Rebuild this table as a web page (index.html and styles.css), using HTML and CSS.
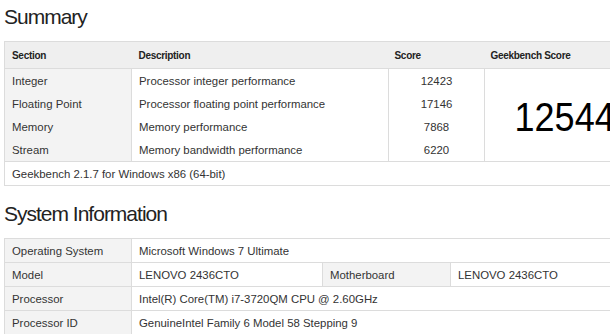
FILE: index.html
```html
<!DOCTYPE html>
<html lang="en">
<head>
  <meta charset="UTF-8" />
  <title>Geekbench Result</title>
  <link rel="stylesheet" href="styles.css">
</head>
<body>
  <div class="page">
    <h2 class="title">Summary</h2>
    <table class="summary">
      <colgroup>
        <col class="col-section">
        <col class="col-desc">
        <col class="col-score">
        <col class="col-total">
      </colgroup>
      <thead>
        <tr>
          <th>Section</th>
          <th>Description</th>
          <th>Score</th>
          <th>Geekbench Score</th>
        </tr>
      </thead>
      <tbody>
        <tr>
          <td class="label">Integer</td>
          <td class="desc">Processor integer performance</td>
          <td class="score">12423</td>
          <td class="total" rowspan="4"><span class="total-num">12544</span></td>
        </tr>
        <tr>
          <td class="label">Floating Point</td>
          <td class="desc">Processor floating point performance</td>
          <td class="score">17146</td>
        </tr>
        <tr>
          <td class="label">Memory</td>
          <td class="desc">Memory performance</td>
          <td class="score">7868</td>
        </tr>
        <tr>
          <td class="label">Stream</td>
          <td class="desc">Memory bandwidth performance</td>
          <td class="score">6220</td>
        </tr>
        <tr>
          <td class="footer" colspan="4">Geekbench 2.1.7 for Windows x86 (64-bit)</td>
        </tr>
      </tbody>
    </table>

    <h2 class="title sysinfo-title">System Information</h2>
    <table class="sysinfo">
      <colgroup>
        <col class="col-key">
        <col class="col-val">
        <col class="col-key2">
        <col class="col-val2">
      </colgroup>
      <tr>
        <td class="label">Operating System</td>
        <td colspan="3">Microsoft Windows 7 Ultimate</td>
      </tr>
      <tr>
        <td class="label">Model</td>
        <td>LENOVO 2436CTO</td>
        <td class="label">Motherboard</td>
        <td>LENOVO 2436CTO</td>
      </tr>
      <tr>
        <td class="label">Processor</td>
        <td colspan="3">Intel(R) Core(TM) i7-3720QM CPU @ 2.60GHz</td>
      </tr>
      <tr>
        <td class="label">Processor ID</td>
        <td colspan="3">GenuineIntel Family 6 Model 58 Stepping 9</td>
      </tr>
    </table>
  </div>
</body>
</html>
```

FILE: styles.css
```css
body {
  margin: 0;
  background: #fff;
  color: #333;
  font-family: "Liberation Sans", Arial, sans-serif;
  overflow: hidden;
}

.page {
  width: 637px;
  padding: 0 4px;
}

.title {
  margin: 4px 0 12px;
  font-size: 21px;
  line-height: 25px;
  letter-spacing: -1px;
  font-weight: normal;
  color: #222;
}

.sysinfo-title {
  margin-top: 15px;
}

table {
  width: 100%;
  border-collapse: collapse;
  table-layout: fixed;
  border: 1px solid #dcdcdc;
  font-size: 11.4px;
}

td, th {
  padding: 0 7px;
  text-align: left;
  white-space: nowrap;
}

/* summary */
.col-section { width: 127px; }
.col-desc { width: 257px; }
.col-score { width: 96px; }

.summary th {
  height: 26px;
  background: #efefef;
  border-bottom: 1px solid #dcdcdc;
  font-size: 10px;
  letter-spacing: -0.3px;
  font-weight: bold;
  color: #222;
}

.summary th:nth-child(3),
.summary th:nth-child(4) { padding-left: 6px; }

.summary td {
  height: 23px;
}

.summary .label {
  background: #f3f3f3;
  border-right: 1px solid #dcdcdc;
}

.summary .score {
  text-align: center;
  border-left: 1px solid #dcdcdc;
  border-right: 1px solid #dcdcdc;
}

.summary .total {
  text-align: center;
  color: #000;
  padding: 4px 0 0 4px;
}

.total-num {
  display: inline-block;
  font-size: 40px;
  transform: scaleX(0.9);
}

.summary .footer {
  border-top: 1px solid #dcdcdc;
  background: #fff;
}

/* system information */
.col-key { width: 127px; }
.col-val { width: 191px; }
.col-key2 { width: 128px; }

.sysinfo td {
  height: 23px;
  border-bottom: 1px solid #dcdcdc;
}

.sysinfo .label {
  background: #f3f3f3;
  border-right: 1px solid #dcdcdc;
}

.sysinfo td:nth-child(2) {
  border-right: 1px solid #dcdcdc;
}
```
